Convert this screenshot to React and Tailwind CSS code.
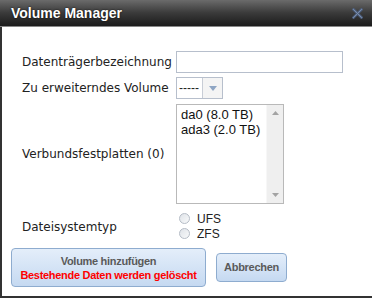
export default function App() {
  const label = "text-[12px] text-[#222] [font-family:'DejaVu_Sans',Verdana,sans-serif]";
  const btnFont = "[font-family:'Liberation_Sans',Arial,sans-serif] font-bold text-[11px] tracking-[-0.3px]";
  return (
    <div className="w-[372px] h-[298px] bg-white overflow-hidden flex flex-col">
      <div className="h-[27px] shrink-0 flex items-center justify-between pl-[11px] pr-[9px] bg-gradient-to-b from-[#6b6b6b] via-[#3a3a3a] to-[#1c1c1c] border-b border-[#888]">
        <span className="text-white font-bold text-[14px] [font-family:'Liberation_Sans',Arial,sans-serif] [text-shadow:0_0_2px_rgba(0,0,0,0.9)]">Volume Manager</span>
        <svg width="11" height="11" viewBox="0 0 11 11">
          <path d="M1.5 1.5 L9.5 9.5 M9.5 1.5 L1.5 9.5" stroke="#4f6180" strokeWidth="2.6" strokeLinecap="square" />
          <path d="M1.5 1.5 L9.5 9.5 M9.5 1.5 L1.5 9.5" stroke="#7f91ad" strokeWidth="0.9" strokeLinecap="square" />
        </svg>
      </div>
      <div className="flex-1 border-l-2 border-b-2 border-[#333] flex flex-col pt-[24px]">
        <div className="flex items-center h-[22px]">
          <div className={`w-[174px] pl-[20px] ${label}`}>Datenträgerbezeichnung</div>
          <div className="w-[167px] h-[22px] border border-[#b7bfcc]" />
        </div>
        <div className="flex items-center h-[22px] mt-[4px]">
          <div className={`w-[174px] pl-[20px] ${label}`}>Zu erweiterndes Volume</div>
          <div className="w-[47px] h-[22px] border border-[#b7bfcc] flex">
            <div className="flex-1 flex items-center pl-[2px] text-[12px] leading-none text-[#222] [font-family:'Liberation_Sans',Arial,sans-serif]">-----</div>
            <div className="w-[20px] border-l border-[#c8cdd6] bg-[#f4f4f4] flex items-center justify-center">
              <svg width="8" height="5" viewBox="0 0 8 5"><path d="M0 0 L8 0 L4 5 Z" fill="#8fa6c4" /></svg>
            </div>
          </div>
        </div>
        <div className="flex items-center h-[100px] mt-[5px]">
          <div className={`w-[174px] pl-[20px] ${label}`}>Verbundsfestplatten (0)</div>
          <div className="w-[108px] h-[100px] border border-[#b9b9b9] flex">
            <div className="flex-1 pl-[4px] pt-[2px] text-[13px] leading-[15px] whitespace-nowrap text-[#111] [font-family:'Liberation_Sans',Arial,sans-serif]">
              <div>da0 (8.0 TB)</div>
              <div>ada3 (2.0 TB)</div>
            </div>
            <div className="w-[17px] bg-[#efefef] flex flex-col justify-between items-center py-[6px] border-l border-[#f7f7f7]">
              <svg width="7" height="4" viewBox="0 0 7 4"><path d="M0 4 L7 4 L3.5 0 Z" fill="#a3a3a3" /></svg>
              <svg width="7" height="4" viewBox="0 0 7 4"><path d="M0 0 L7 0 L3.5 4 Z" fill="#a3a3a3" /></svg>
            </div>
          </div>
        </div>
        <div className="flex items-center h-[32px] mt-[6px]">
          <div className={`w-[174px] pl-[20px] pt-[2px] ${label}`}>Dateisystemtyp</div>
          <div className="flex flex-col gap-0 pl-[3px]">
            {["UFS", "ZFS"].map((t) => (
              <div key={t} className="flex items-center gap-[7px] h-[15px]">
                <span className="w-[11px] h-[11px] rounded-full border border-[#b5bcc6] bg-gradient-to-br from-[#dfe3e8] to-[#f8f9fa]" />
                <span className="text-[12px] text-[#222] [font-family:'Liberation_Sans',Arial,sans-serif]">{t}</span>
              </div>
            ))}
          </div>
        </div>
        <div className="flex items-center gap-[10px] pl-[9px] mt-[6px]">
          <div className={`w-[195px] h-[39px] rounded-[4px] border border-[#8eaccf] bg-gradient-to-b from-[#e4eefa] to-[#c5d9f1] flex flex-col items-center justify-center leading-[14px] ${btnFont}`}>
            <span className="text-[#5a5a5a]">Volume hinzufügen</span>
            <span className="text-[#ff0000]">Bestehende Daten werden gelöscht</span>
          </div>
          <div className={`w-[71px] h-[29px] rounded-[4px] border border-[#8eaccf] bg-gradient-to-b from-[#e4eefa] to-[#c5d9f1] flex items-center justify-center text-[#5a5a5a] ${btnFont}`}>
            Abbrechen
          </div>
        </div>
      </div>
    </div>
  );
}
